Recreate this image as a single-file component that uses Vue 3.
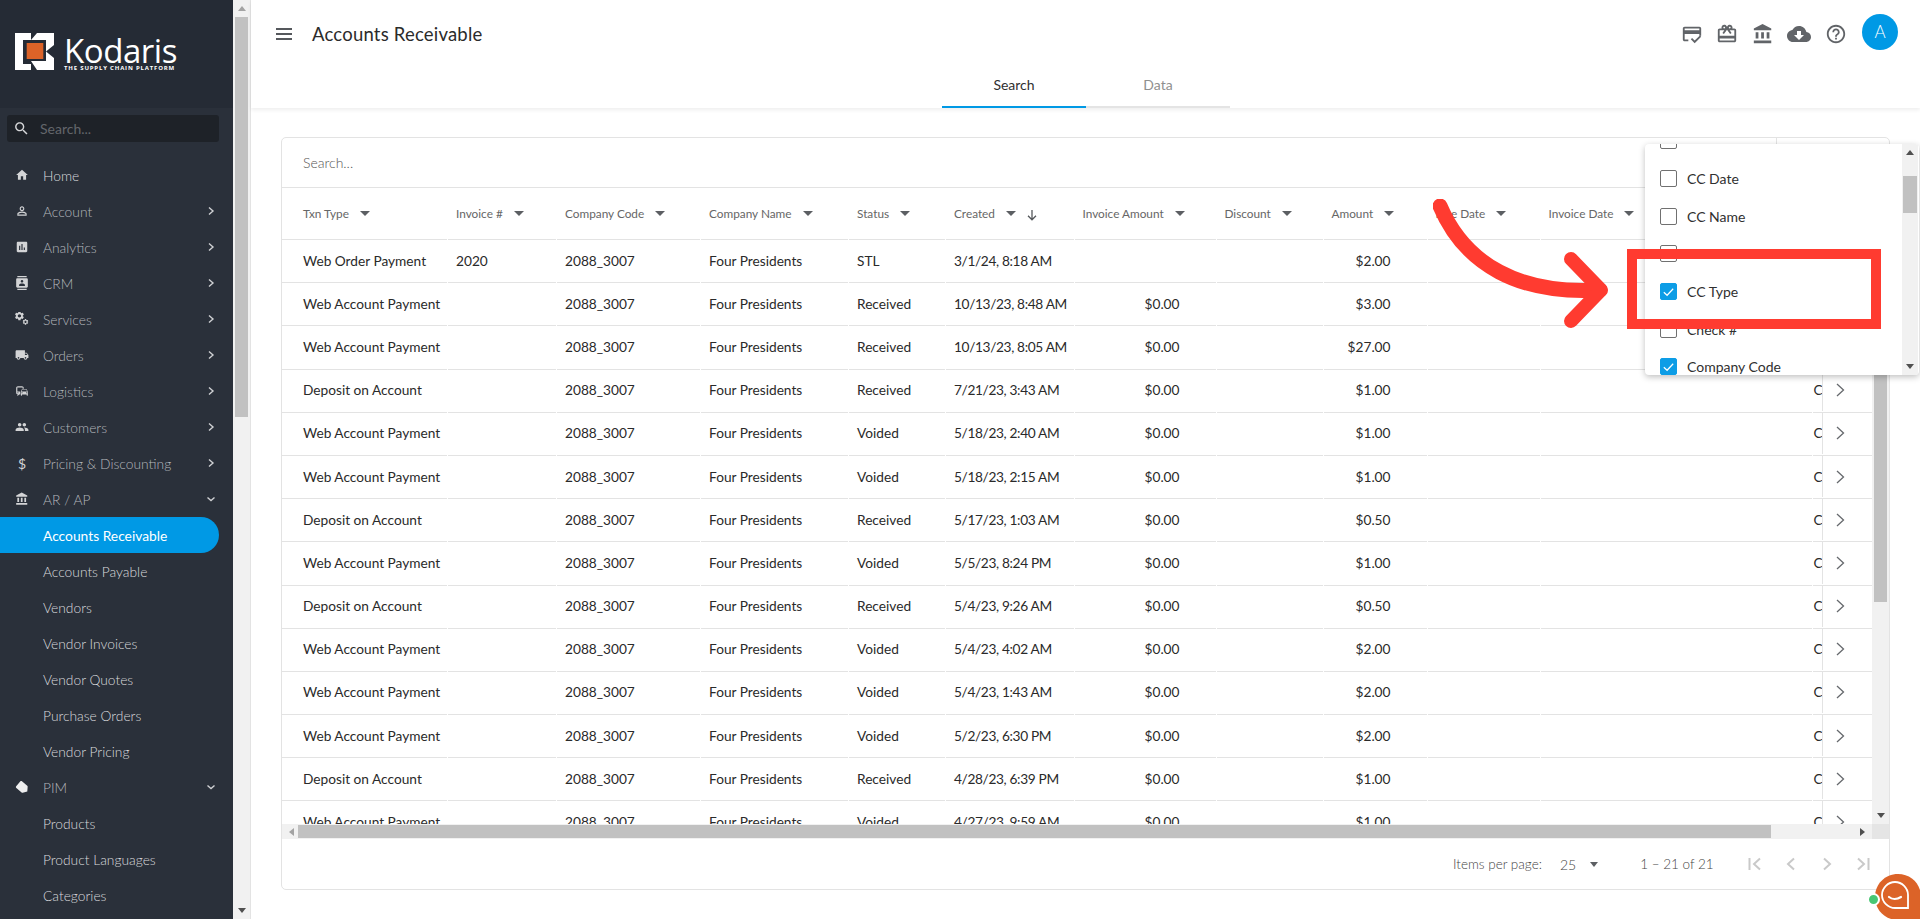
<script setup>
const menu = [
  { label: 'Home', icon: 'home', bright: true },
  { label: 'Account', icon: 'account', chevron: 'right' },
  { label: 'Analytics', icon: 'analytics', chevron: 'right' },
  { label: 'CRM', icon: 'crm', chevron: 'right' },
  { label: 'Services', icon: 'services', chevron: 'right' },
  { label: 'Orders', icon: 'orders', chevron: 'right' },
  { label: 'Logistics', icon: 'logistics', chevron: 'right' },
  { label: 'Customers', icon: 'customers', chevron: 'right' },
  { label: 'Pricing & Discounting', icon: 'pricing', chevron: 'right' },
  { label: 'AR / AP', icon: 'bank', chevron: 'down' },
  { label: 'Accounts Receivable', active: true },
  { label: 'Accounts Payable', sub: true },
  { label: 'Vendors', sub: true },
  { label: 'Vendor Invoices', sub: true },
  { label: 'Vendor Quotes', sub: true },
  { label: 'Purchase Orders', sub: true },
  { label: 'Vendor Pricing', sub: true },
  { label: 'PIM', icon: 'tag', chevron: 'down' },
  { label: 'Products', sub: true },
  { label: 'Product Languages', sub: true },
  { label: 'Categories', sub: true },
]
const paths = {
  home: 'M10 20v-6h4v6h5v-8h3L12 3 2 12h3v8z',
  account: 'M12 5.9c1.16 0 2.1.94 2.1 2.1s-.94 2.1-2.1 2.1S9.9 9.16 9.9 8s.94-2.1 2.1-2.1m0 9c2.97 0 6.1 1.46 6.1 2.1v1.1H5.9V17c0-.64 3.13-2.1 6.1-2.1M12 4C9.79 4 8 5.79 8 8s1.79 4 4 4 4-1.79 4-4-1.79-4-4-4zm0 9c-2.67 0-8 1.34-8 4v3h16v-3c0-2.66-5.33-4-8-4z',
  analytics: 'M19 3H5c-1.1 0-2 .9-2 2v14c0 1.1.9 2 2 2h14c1.1 0 2-.9 2-2V5c0-1.1-.9-2-2-2zM9 17H7v-7h2v7zm4 0h-2V7h2v10zm4 0h-2v-4h2v4z',
  crm: 'M20 0H4v2h16V0zM4 24h16v-2H4v2zM20 4H4c-1.1 0-2 .9-2 2v12c0 1.1.9 2 2 2h16c1.1 0 2-.9 2-2V6c0-1.1-.9-2-2-2zm-8 2.75c1.24 0 2.25 1.01 2.25 2.25s-1.01 2.25-2.25 2.25S9.75 10.24 9.75 9 10.76 6.75 12 6.75zM17 17H7v-1.5c0-1.67 3.33-2.5 5-2.5s5 .83 5 2.5V17z',
  orders: 'M20 8h-3V4H3c-1.1 0-2 .9-2 2v11h2c0 1.66 1.34 3 3 3s3-1.34 3-3h6c0 1.66 1.34 3 3 3s3-1.34 3-3h2v-5l-3-4zM6 18.5c-.83 0-1.5-.67-1.5-1.5s.67-1.5 1.5-1.5 1.5.67 1.5 1.5-.67 1.5-1.5 1.5zm13.5-9l1.96 2.5H17V9.5h2.5zm-1.5 9c-.83 0-1.5-.67-1.5-1.5s.67-1.5 1.5-1.5 1.5.67 1.5 1.5-.67 1.5-1.5 1.5z',
  logistics: 'M12 4H5C3.34 4 2 5.34 2 7v8c0 1.66 1.34 3 3 3l-1 1v1h1l2-2.03L9 18v-5H4V5.98L13 6v2h2V7c0-1.66-1.34-3-3-3zM5 14c.55 0 1 .45 1 1s-.45 1-1 1-1-.45-1-1 .45-1 1-1zm15.57-4.34c-.14-.4-.52-.66-.97-.66h-7.19c-.46 0-.83.26-.98.66L10 13.77l.01 5.51c0 .38.31.72.69.72h.62c.38 0 .68-.38.68-.76V18h8v1.24c0 .38.31.76.69.76h.61c.38 0 .69-.34.69-.72l.01-1.37v-4.14l-1.43-4.11zm-8.16.34h7.19l1.03 3h-9.25l1.03-3zM12 16c-.55 0-1-.45-1-1s.45-1 1-1 1 .45 1 1-.45 1-1 1zm8 0c-.55 0-1-.45-1-1s.45-1 1-1 1 .45 1 1-.45 1-1 1z',
  customers: 'M16 11c1.66 0 2.99-1.34 2.99-3S17.66 5 16 5c-1.66 0-3 1.34-3 3s1.34 3 3 3zm-8 0c1.66 0 2.99-1.34 2.99-3S9.66 5 8 5C6.34 5 5 6.34 5 8s1.34 3 3 3zm0 2c-2.33 0-7 1.17-7 3.5V19h14v-2.5c0-2.33-4.67-3.5-7-3.5zm8 0c-.29 0-.62.02-.97.05 1.16.84 1.97 1.97 1.97 3.45V19h6v-2.5c0-2.33-4.67-3.5-7-3.5z',
  bank: 'M4 10v7h3v-7H4zm6 0v7h3v-7h-3zM2 22h19v-3H2v3zm14-12v7h3v-7h-3zm-4.5-9L2 6v2h19V6l-9.5-5z',
  tag: 'M17.63 5.84C17.27 5.33 16.67 5 16 5L5 5.01C3.9 5.01 3 5.9 3 7v10c0 1.1.9 1.99 2 1.99L16 19c.67 0 1.27-.33 1.63-.84L22 12l-4.37-6.16z',
  score: 'M20 4H4c-1.11 0-2 .89-2 2v12c0 1.11.89 2 2 2h4v-2H4v-6h16v2h2V6c0-1.11-.89-2-2-2zm0 4H4V6h16v2zm-5.07 11.17l-2.83-2.83-1.41 1.41L14.93 22 22 14.93l-1.41-1.41-5.66 5.65z',
  gift: 'M20 6h-2.18c.11-.31.18-.65.18-1 0-1.66-1.34-3-3-3-1.05 0-1.96.54-2.5 1.35l-.5.67-.5-.68C10.96 2.54 10.05 2 9 2 7.34 2 6 3.34 6 5c0 .35.07.69.18 1H4c-1.11 0-1.99.89-1.99 2L2 19c0 1.11.89 2 2 2h16c1.11 0 2-.89 2-2V8c0-1.11-.89-2-2-2zm-5-2c.55 0 1 .45 1 1s-.45 1-1 1-1-.45-1-1 .45-1 1-1zM9 4c.55 0 1 .45 1 1s-.45 1-1 1-1-.45-1-1 .45-1 1-1zm11 15H4v-2h16v2zm0-5H4V8h5.08L7 10.83 8.62 12 11 8.76l1-1.36 1 1.36L15.38 12 17 10.83 14.92 8H20v6z',
  cloud: 'M19.35 10.04C18.67 6.59 15.64 4 12 4 9.11 4 6.6 5.64 5.35 8.04 2.34 8.36 0 10.91 0 14c0 3.31 2.69 6 6 6h13c2.76 0 5-2.24 5-5 0-2.64-2.05-4.78-4.65-4.96zM17 13l-5 5-5-5h3V9h4v4h3z',
  help: 'M11 18h2v-2h-2v2zm1-16C6.48 2 2 6.48 2 12s4.48 10 10 10 10-4.48 10-10S17.52 2 12 2zm0 18c-4.41 0-8-3.59-8-8s3.59-8 8-8 8 3.59 8 8-3.59 8-8 8zm0-14c-2.21 0-4 1.79-4 4h2c0-1.1.9-2 2-2s2 .9 2 2c0 2-3 1.75-3 5h2c0-2.25 3-2.5 3-5 0-2.21-1.79-4-4-4z',
  gear: 'M19.14 12.94c.04-.3.06-.61.06-.94 0-.32-.02-.64-.07-.94l2.03-1.58c.18-.14.23-.41.12-.61l-1.92-3.32c-.12-.22-.37-.29-.59-.22l-2.39.96c-.5-.38-1.03-.7-1.62-.94l-.36-2.54c-.04-.24-.24-.41-.48-.41h-3.84c-.24 0-.43.17-.47.41l-.36 2.54c-.59.24-1.13.57-1.62.94l-2.39-.96c-.22-.08-.47 0-.59.22L2.74 8.87c-.12.21-.08.47.12.61l2.03 1.58c-.05.3-.09.63-.09.94s.02.64.07.94l-2.03 1.58c-.18.14-.23.41-.12.61l1.92 3.32c.12.22.37.29.59.22l2.39-.96c.5.38 1.03.7 1.62.94l.36 2.54c.05.24.24.41.48.41h3.84c.24 0 .44-.17.47-.41l.36-2.54c.59-.24 1.13-.56 1.62-.94l2.39.96c.22.08.47 0 .59-.22l1.92-3.32c.12-.22.07-.47-.12-.61l-2.01-1.58zM12 15.6c-1.98 0-3.6-1.62-3.6-3.6s1.62-3.6 3.6-3.6 3.6 1.62 3.6 3.6-1.62 3.6-3.6 3.6z',
}
const topIcons = ['score', 'gift', 'bank', 'cloud', 'help']
const columns = [
  { label: 'Txn Type', w: 165, cls: 'first' },
  { label: 'Invoice #', w: 108 },
  { label: 'Company Code', w: 143 },
  { label: 'Company Name', w: 147 },
  { label: 'Status', w: 96 },
  { label: 'Created', w: 127.5, sort: true },
  { label: 'Invoice Amount', w: 141 },
  { label: 'Discount', w: 106 },
  { label: 'Amount', w: 103 },
  { label: 'Due Date', w: 112 },
  { label: 'Invoice Date', w: 271 },
  { label: '', w: 160 },
]
const gridTemplate = columns.map(c => c.w + 'px').join(' ')
const WAP = 'Web Account Payment', DOA = 'Deposit on Account'
const rows = [
  ['Web Order Payment', '2020', 'STL', '3/1/24, 8:18 AM', '', '$2.00'],
  [WAP, '', 'Received', '10/13/23, 8:48 AM', '$0.00', '$3.00'],
  [WAP, '', 'Received', '10/13/23, 8:05 AM', '$0.00', '$27.00'],
  [DOA, '', 'Received', '7/21/23, 3:43 AM', '$0.00', '$1.00'],
  [WAP, '', 'Voided', '5/18/23, 2:40 AM', '$0.00', '$1.00'],
  [WAP, '', 'Voided', '5/18/23, 2:15 AM', '$0.00', '$1.00'],
  [DOA, '', 'Received', '5/17/23, 1:03 AM', '$0.00', '$0.50'],
  [WAP, '', 'Voided', '5/5/23, 8:24 PM', '$0.00', '$1.00'],
  [DOA, '', 'Received', '5/4/23, 9:26 AM', '$0.00', '$0.50'],
  [WAP, '', 'Voided', '5/4/23, 4:02 AM', '$0.00', '$2.00'],
  [WAP, '', 'Voided', '5/4/23, 1:43 AM', '$0.00', '$2.00'],
  [WAP, '', 'Voided', '5/2/23, 6:30 PM', '$0.00', '$2.00'],
  [DOA, '', 'Received', '4/28/23, 6:39 PM', '$0.00', '$1.00'],
  [WAP, '', 'Voided', '4/27/23, 9:59 AM', '$0.00', '$1.00'],
]
const options = [
  { label: '', checked: false },
  { label: 'CC Date', checked: false },
  { label: 'CC Name', checked: false },
  { label: 'CC Number', checked: false },
  { label: 'CC Type', checked: true },
  { label: 'Check #', checked: false },
  { label: 'Company Code', checked: true },
]
</script>

<template>
  <div class="page">
    <aside class="sidebar">
      <div class="brand">
        <svg class="logo-mark" viewBox="0 0 39 39" width="39" height="39">
          <path fill="#fff" d="M0 1H16V8H8V32H16V38H0zM22 1H39V13L31 19.500 39 26V38H22L16 29H31V8H16z"/>
          <rect x="11.700" y="11" width="16.600" height="16" fill="#dc6328"/>
        </svg>
        <div class="wordmark">
          <span class="word">Kodaris</span>
          <span class="tagline">THE SUPPLY CHAIN PLATFORM</span>
        </div>
      </div>
      <div class="side-body">
        <label class="side-search">
          <svg viewBox="0 0 24 24" width="17" height="17"><path fill="#d6d7d9" d="M15.5 14h-.79l-.28-.27C15.41 12.59 16 11.11 16 9.500 16 5.910 13.090 3 9.500 3S3 5.910 3 9.500 5.910 16 9.500 16c1.610 0 3.090-.59 4.230-1.570l.27.28v.79l5 4.990L20.490 19l-4.990-5zm-6 0C7.010 14 5 11.990 5 9.500S7.010 5 9.500 5 14 7.010 14 9.500 11.990 14 9.500 14z"/></svg>
          <span>Search...</span>
        </label>
        <nav class="menu">
          <div v-for="m in menu" :key="m.label" class="item" :class="{ active: m.active, sub: m.sub, bright: m.bright }">
            <span class="ico">
              <svg v-if="m.icon === 'services'" viewBox="0 0 24 24" width="14" height="14">
                <path :d="paths.gear" fill="#d3d4d6" transform="translate(-2 -3) scale(.8)"/>
                <path :d="paths.gear" fill="#d3d4d6" transform="translate(12 11) scale(.5)"/>
              </svg>
              <span v-else-if="m.icon === 'pricing'" class="dollar">$</span>
              <svg v-else-if="m.icon === 'tag'" viewBox="0 0 24 24" width="15" height="15"><path :d="paths.tag" fill="#eeeeef" transform="rotate(40 12 12)"/></svg>
              <svg v-else-if="m.icon" viewBox="0 0 24 24" width="14" height="14"><path :d="paths[m.icon]" fill="#d3d4d6"/></svg>
            </span>
            <span class="lbl">{{ m.label }}</span>
            <svg v-if="m.chevron === 'right'" class="chev" viewBox="0 0 10 10" width="10" height="10"><path d="M3 1.500 7 5 3 8.500" fill="none" stroke="#cfd0d3" stroke-width="1.400"/></svg>
            <svg v-if="m.chevron === 'down'" class="chev" viewBox="0 0 10 10" width="10" height="10"><path d="M1.500 3.500 5 6.500 8.500 3.500" fill="none" stroke="#cfd0d3" stroke-width="1.400"/></svg>
          </div>
        </nav>
      </div>
    </aside>

    <div class="page-scroll">
      <span class="arrow up"></span>
      <span class="thumb"></span>
      <span class="arrow down"></span>
    </div>

    <main class="main">
      <header class="topbar">
        <div class="topline">
          <div class="burger"><i></i><i></i><i></i></div>
          <h1>Accounts Receivable</h1>
          <div class="top-icons">
            <svg v-for="i in topIcons" :key="i" viewBox="0 0 24 24" :width="i === 'cloud' ? 24 : 22" :height="i === 'cloud' ? 24 : 22"><path :d="paths[i]" fill="#616468"/></svg>
            <span class="avatar">A</span>
          </div>
        </div>
        <div class="tabs">
          <span class="tab on">Search</span>
          <span class="tab">Data</span>
        </div>
      </header>

      <section class="card">
        <div class="search-row">
          <span class="placeholder">Search...</span>
          <span class="picker"></span>
        </div>
        <div class="table-wrap">
          <div class="table-view">
            <div class="table-cols">
              <div class="grid head" :style="{ gridTemplateColumns: gridTemplate }">
                <div v-for="c in columns" :key="c.label" class="cell" :class="c.cls">
                  <template v-if="c.label">
                    <span>{{ c.label }}</span><i class="caret"></i>
                    <svg v-if="c.sort" class="sort" viewBox="0 0 12 12" width="12" height="12"><path d="M6 1v9.500M2 6.800 6 10.800 10 6.800" fill="none" stroke="#55585c" stroke-width="1.300"/></svg>
                  </template>
                </div>
              </div>
              <div v-for="(r, idx) in rows" :key="idx" class="grid body" :style="{ gridTemplateColumns: gridTemplate }">
                <div class="cell first">{{ r[0] }}</div>
                <div class="cell">{{ r[1] }}</div>
                <div class="cell">2088_3007</div>
                <div class="cell">Four Presidents</div>
                <div class="cell">{{ r[2] }}</div>
                <div class="cell date">{{ r[3] }}</div>
                <div class="cell num">{{ r[4] }}</div>
                <div class="cell"></div>
                <div class="cell num">{{ r[5] }}</div>
                <div class="cell"></div>
                <div class="cell"></div>
                <div class="cell tail">
                  <span class="c-letter">C</span>
                  <span class="go"><svg viewBox="0 0 12 14" width="12" height="14"><path d="M3 1 9.500 7 3 13" fill="none" stroke="#66696d" stroke-width="1.300"/></svg></span>
                </div>
              </div>
            </div>
            <div class="v-scroll">
              <span class="arrow up dark"></span>
              <span class="v-thumb"></span>
              <span class="arrow down dark"></span>
            </div>
          </div>
          <div class="h-scroll">
            <span class="arrow left"></span>
            <span class="h-thumb"></span>
            <span class="arrow right"></span>
            <span class="corner"></span>
          </div>
        </div>
        <footer class="pager">
          <span>Items per page:</span>
          <span class="size">25</span><i class="caret small"></i>
          <span class="range">1 – 21 of 21</span>
          <svg viewBox="0 0 16 16" width="16" height="16"><path d="M2.500 2v12M13 2.500 7 8l6 5.500" fill="none" stroke="#c9c9c9" stroke-width="2"/></svg>
          <svg viewBox="0 0 16 16" width="16" height="16"><path d="M11 2.500 5 8l6 5.500" fill="none" stroke="#c9c9c9" stroke-width="2"/></svg>
          <svg viewBox="0 0 16 16" width="16" height="16"><path d="M5 2.500 11 8l-6 5.500" fill="none" stroke="#c9c9c9" stroke-width="2"/></svg>
          <svg viewBox="0 0 16 16" width="16" height="16"><path d="M13.500 2v12M3 2.500 9 8l-6 5.500" fill="none" stroke="#c9c9c9" stroke-width="2"/></svg>
        </footer>
      </section>
    </main>

    <div class="popup">
      <div class="opt-list">
        <div v-for="(o, i) in options" :key="i" class="opt">
          <span class="box" :class="{ checked: o.checked }">
            <svg v-if="o.checked" viewBox="0 0 16 16" width="16" height="16"><path d="M3 8.300 6.500 11.500 13 4.500" fill="none" stroke="#fff" stroke-width="1.300"/></svg>
          </span>
          <span>{{ o.label }}</span>
        </div>
      </div>
      <div class="pop-scroll">
        <span class="arrow up dark"></span>
        <span class="pop-thumb"></span>
        <span class="arrow down dark"></span>
      </div>
    </div>

    <div class="highlight"></div>
    <svg class="callout" width="190" height="140" viewBox="0 0 190 140">
      <g fill="none" stroke="#ff3b30" stroke-linecap="round" stroke-linejoin="round">
        <path d="M7 7C32 66 87 96 167 91" stroke-width="15"/>
        <path d="M138 60 168 91 138 122" stroke-width="14"/>
      </g>
    </svg>

    <div class="chat">
      <span class="dot"></span>
      <svg viewBox="0 0 46 46" width="46" height="46">
        <path fill="#dc6328" d="M23 0C36 0 46 10 46 23V46H23C10 46 0 36 0 23S10 0 23 0z"/>
        <path fill="none" stroke="#fff" stroke-width="1.800" d="M20 8C27 8 33 14 33 21V34H20C13 34 7 28 7 21S13 8 20 8z"/>
        <path fill="none" stroke="#fff" stroke-width="2.200" stroke-linecap="round" d="M14 23c3 2.500 8 2.500 12 0"/>
      </svg>
    </div>
  </div>
</template>

<style>
html, body { margin: 0; background: #fff; overflow: hidden; }
</style>

<style scoped>
.page {
  display: flex;
  width: 1920px;
  height: 919px;
  overflow: hidden;
  position: relative;
  font-family: Lato, "Open Sans", sans-serif;
  color: #212121;
  background: #fff;
}
.sidebar { width: 233px; flex: none; background: #2a303a; display: flex; flex-direction: column; }
.brand { height: 108px; flex: none; background: #252b35; display: flex; align-items: flex-start; padding: 32px 0 0 15px; box-sizing: border-box; gap: 10px; }
.logo-mark { flex: none; }
.wordmark { display: flex; flex-direction: column; color: #fff; margin-top: 5px; }
.word { font: 500 33px/28px "Open Sans", sans-serif; letter-spacing: -.45px; }
.tagline { font: 700 6px/6px "Open Sans", sans-serif; letter-spacing: .82px; white-space: nowrap; }
.side-body { padding-top: 7px; }
.side-search { display: flex; align-items: center; gap: 10px; height: 27px; margin: 0 14px 0 7px; padding-left: 6px; background: #1e2228; border-radius: 3px; color: #63666b; font-size: 14px; }
.menu { margin-top: 15px; display: flex; flex-direction: column; }
.item { height: 36px; display: flex; align-items: center; padding-left: 15px; margin-right: 14px; font-size: 13.800px; font-weight: 300; color: #b4b7bc; box-sizing: border-box; }
.item.sub { color: #dadbde; }
.item.bright { color: #dadbde; }
.item.active { background: #0099e5; color: #fff; border-radius: 0 18px 18px 0; font-weight: 400; }
.ico { width: 28px; flex: none; display: flex; align-items: center; }
.dollar { color: #d3d4d6; font-size: 14px; margin-left: 3px; font-weight: 400; }
.lbl { flex: 1; white-space: nowrap; }
.chev { margin-right: 3px; }

.page-scroll { width: 17px; flex: none; background: #f1f1f1; border-right: 1px solid #e3e3e3; display: flex; flex-direction: column; align-items: center; }
.thumb { width: 13px; height: 400px; background: #c1c1c1; margin-bottom: auto; }
.arrow { flex: none; width: 0; height: 0; border: 4px solid transparent; display: block; }
.arrow.up { border-bottom: 5px solid #a3a3a3; border-top: 0; margin: 6px 0 6px; }
.arrow.down { border-top: 5px solid #505050; border-bottom: 0; margin: 6px 0 6px; }
.arrow.dark.up { border-bottom-color: #505050; }
.arrow.left { border-right: 5px solid #a3a3a3; border-left: 0; }
.arrow.right { border-left: 5px solid #505050; border-right: 0; }

.main { flex: 1; min-width: 0; display: flex; flex-direction: column; }
.topbar { height: 108px; flex: none; box-shadow: 0 2px 4px rgba(0,0,0,.07); display: flex; flex-direction: column; position: relative; }
.topline { height: 60px; display: flex; align-items: center; padding: 7px 22px 0 25px; box-sizing: border-box; }
.burger { width: 16px; display: flex; flex-direction: column; gap: 3px; margin-right: 20px; }
.burger i { display: block; height: 2px; background: #55585c; }
h1 { margin: 0; font-size: 18.500px; font-weight: 400; color: #2b2b2b; flex: 1; letter-spacing: .2px; }
.top-icons { display: flex; align-items: center; gap: 13.500px; }
.avatar { width: 36px; height: 36px; border-radius: 50%; background: #0099e5; color: #fff; display: flex; align-items: center; justify-content: center; font-size: 17px; margin: -4px 0 0 2px; font-weight: 300; }
.tabs { display: flex; padding-left: 691px; height: 48px; }
.tab { width: 144px; box-sizing: border-box; display: flex; align-items: flex-start; justify-content: center; padding-top: 16px; font-size: 14px; color: #8f8f8f; border-bottom: 2px solid #e4e4e4; height: 48px; }
.tab.on { color: #303030; border-bottom-color: #0099e5; }

.card { margin: 29px 30px 0 30px; height: 753px; box-sizing: border-box; border: 1px solid #e3e3e3; border-radius: 5px; display: flex; flex-direction: column; overflow: hidden; }
.search-row { height: 49px; flex: none; border-bottom: 1px solid #e3e3e3; display: flex; align-items: center; padding-left: 21px; font-size: 14px; color: #555; font-weight: 300; }
.placeholder { flex: 1; }
.picker { width: 113px; height: 100%; border-left: 1px solid #e3e3e3; box-sizing: border-box; }
.table-wrap { flex: none; height: 651px; display: flex; flex-direction: column; }
.table-view { height: 636px; display: flex; overflow: hidden; }
.table-cols { flex: 1; min-width: 0; overflow: hidden; }
.grid { display: grid; column-gap: 1px; width: max-content; }
.cell { box-sizing: border-box; padding-left: 8px; display: flex; align-items: center; white-space: nowrap; border-bottom: 1px solid #e3e3e3; font-size: 13.700px; position: relative; }
.cell.first { padding-left: 21px; }
.grid.head .cell { height: 52px; font-size: 11.800px; color: #666; }
.grid.body .cell { height: 43.2px; color: #2a2a2a; padding-bottom: 2px; }
.date { letter-spacing: -.35px; }
.caret { display: inline-block; width: 0; height: 0; border: 5px solid transparent; border-top: 5px solid #5c5f63; border-bottom: 0; margin-left: 11px; flex: none; }
.caret.small { border-width: 4.500px; border-top-width: 5px; margin-left: 14px; }
.sort { margin-left: 10px; position: relative; top: 1px; }
.num { justify-content: flex-end; padding-right: 36px; }
.tail { position: relative; }
.c-letter { position: absolute; left: 1px; }
.go { position: absolute; left: 9px; top: 0; bottom: 1px; width: 200px; background: #fff; border-left: 1px solid #e3e3e3; display: flex; align-items: center; padding-left: 11px; }
.v-scroll { width: 17px; flex: none; background: #f1f1f1; display: flex; flex-direction: column; align-items: center; position: relative; z-index: 1; }
.v-thumb { width: 13px; height: 397px; margin-bottom: auto; background: #c1c1c1; }
.h-scroll { height: 15px; flex: none; background: #f1f1f1; display: flex; align-items: center; padding-left: 7px; }
.h-thumb { width: 1473px; height: 13px; background: #c1c1c1; margin-left: 4px; }
.h-scroll .arrow.right { margin-left: auto; margin-right: 7px; }
.corner { width: 17px; height: 15px; background: #e5e5e5; }
.pager { flex: 1; display: flex; align-items: center; font-size: 13.500px; color: #444; padding-left: 1171px; font-weight: 300; }
.size { margin-left: 18px; font-size: 14px; }
.range { margin-left: 42px; width: 107px; }
.pager svg + svg { margin-left: 20px; }

.popup { position: absolute; left: 1645px; top: 144px; width: 274px; height: 231px; background: #fff; border-radius: 4px; box-shadow: 0 2px 6px rgba(0,0,0,.25); display: flex; overflow: hidden; z-index: 2; }
.opt-list { flex: 1; margin-top: -22px; }
.opt { height: 37.700px; display: flex; align-items: center; padding-left: 15px; gap: 10px; font-size: 14px; color: #303030; }
.box { width: 17px; height: 17px; box-sizing: border-box; border: 1.500px solid #707070; border-radius: 2px; flex: none; display: flex; align-items: center; justify-content: center; }
.box.checked { background: #0d9de6; border-color: #0d9de6; }
.pop-scroll { width: 16px; flex: none; margin-right: 1px; background: #f1f1f1; display: flex; flex-direction: column; align-items: center; }
.pop-thumb { width: 14px; height: 37px; background: #c1c1c1; margin-top: 15px; margin-bottom: auto; }
.highlight { position: absolute; left: 1627px; top: 249px; width: 254px; height: 80px; box-sizing: border-box; border: 10px solid #ff3b30; z-index: 3; }
.callout { position: absolute; left: 1433px; top: 199px; z-index: 3; }
.chat { position: absolute; left: 1875px; top: 874px; width: 46px; height: 46px; z-index: 4; }
.dot { position: absolute; left: -8px; top: 19px; width: 9px; height: 9px; border-radius: 50%; background: #48c774; border: 2px solid #fff; }
</style>
